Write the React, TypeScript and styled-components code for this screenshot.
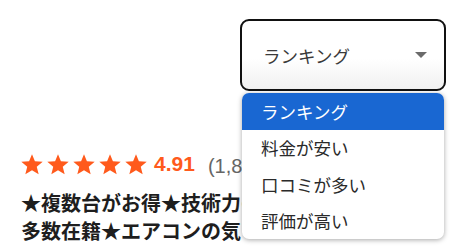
import { useState } from "react";
import styled, { createGlobalStyle } from "styled-components";

const GlobalStyle = createGlobalStyle`
  html, body {
    margin: 0;
    padding: 0;
    background: #ffffff;
  }
  body {
    font-family: "Liberation Sans", "Noto Sans CJK JP", sans-serif;
    color: #222;
    overflow: hidden;
  }
`;

const Page = styled.div`
  width: 452px;
  height: 250px;
  overflow: hidden;
`;

const Header = styled.div`
  display: flex;
  justify-content: flex-end;
  padding: 19px 6px 0 0;
`;

const SelectWrap = styled.div`
  position: relative;
  width: 206px;
`;

const SelectBox = styled.div`
  box-sizing: border-box;
  height: 72px;
  border: 2px solid #111;
  border-radius: 9px;
  background: linear-gradient(#ffffff 55%, #f1f1f1);
  display: flex;
  align-items: center;
  justify-content: space-between;
  padding: 0 17px 0 21px;
  font-family: "Noto Sans CJK JP", sans-serif;
  font-size: 17.5px;
  color: #3a3a3a;
`;

const Caret = styled.span`
  width: 0;
  height: 0;
  border-left: 6px solid transparent;
  border-right: 6px solid transparent;
  border-top: 6px solid #6b6b6b;
`;

const Menu = styled.ul`
  position: absolute;
  top: calc(100% + 2px);
  left: 2px;
  width: 202px;
  margin: 0;
  padding: 0;
  list-style: none;
  background: #fff;
  border-radius: 7px;
  overflow: hidden;
  box-shadow: 0 1px 5px rgba(0, 0, 0, 0.35);
  z-index: 10;
`;

const MenuItem = styled.li<{ $active?: boolean }>`
  height: 36.5px;
  display: flex;
  align-items: center;
  padding-left: 19px;
  font-family: "Noto Sans CJK JP", sans-serif;
  font-size: 17.5px;
  background: ${(p) => (p.$active ? "#1967d2" : "transparent")};
  color: ${(p) => (p.$active ? "#ffffff" : "#2a2a2a")};
`;

const Content = styled.div`
  padding: 60px 0 0 21px;
  width: 221px;
  overflow: hidden;
`;

const RatingRow = styled.div`
  display: flex;
  align-items: center;
  height: 26px;
  white-space: nowrap;
`;

const Stars = styled.div`
  display: flex;
  gap: 4px;
`;

const Score = styled.span`
  margin-left: 7px;
  font-size: 21px;
  font-weight: 700;
  color: #ff5a1c;
`;

const Count = styled.span`
  margin-left: 13px;
  font-size: 20px;
  color: #666;
`;

const Title = styled.h2`
  margin: 12px 0 0;
  font-family: "Noto Sans CJK JP", sans-serif;
  font-size: 20px;
  font-weight: 700;
  line-height: 28px;
  color: #1e1e1e;
  white-space: nowrap;
`;

const Star = () => (
  <svg width="22" height="21" viewBox="0 0 24 23">
    <path
      d="M12 0.3l3.2 7.7 8.5 0.6-6.5 5.4 2.1 8.2-7.3-4.5-7.3 4.5 2.1-8.2L0.3 8.6l8.5-0.6z"
      fill="#ff5a1c"
    />
  </svg>
);

const options = ["ランキング", "料金が安い", "口コミが多い", "評価が高い"];

export default function App() {
  const [selected] = useState(0);
  return (
    <Page>
      <GlobalStyle />
      <Header>
        <SelectWrap>
          <SelectBox>
            <span>{options[selected]}</span>
            <Caret />
          </SelectBox>
          <Menu>
            {options.map((o, i) => (
              <MenuItem key={o} $active={i === selected}>
                {o}
              </MenuItem>
            ))}
          </Menu>
        </SelectWrap>
      </Header>
      <Content>
        <RatingRow>
          <Stars>
            {[0, 1, 2, 3, 4].map((i) => (
              <Star key={i} />
            ))}
          </Stars>
          <Score>4.91</Score>
          <Count>(1,832件)</Count>
        </RatingRow>
        <Title>
          ★複数台がお得★技術力の高いスタッフ
          <br />
          多数在籍★エアコンの気になる汚れも
        </Title>
      </Content>
    </Page>
  );
}
